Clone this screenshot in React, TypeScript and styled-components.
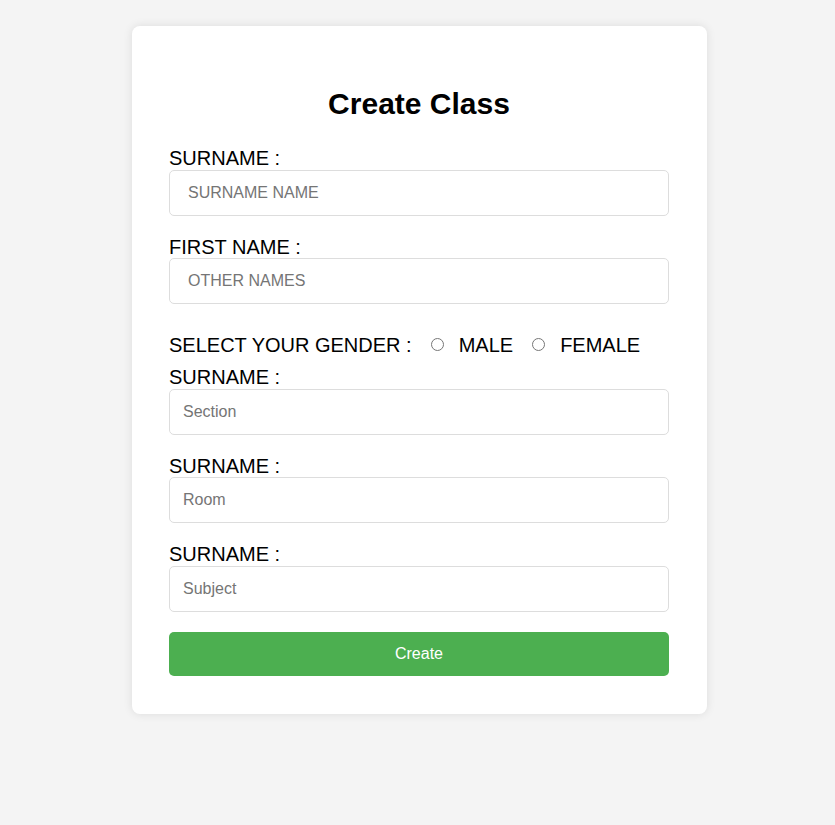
import React from "react";
import styled, { createGlobalStyle } from "styled-components";

const GlobalStyle = createGlobalStyle`
  html, body {
    margin: 0;
    padding: 0;
    background: #f4f4f4;
    font-family: "Liberation Sans", Arial, sans-serif;
  }
`;

const Page = styled.div`
  display: flex;
  justify-content: center;
  padding: 26px 0 0 4px;
  min-height: 825px;
  box-sizing: border-box;
`;

const Card = styled.form`
  width: 575px;
  box-sizing: border-box;
  background: #fff;
  border-radius: 8px;
  box-shadow: 0 0 10px rgba(0, 0, 0, 0.1);
  padding: 61px 38px 38px 37px;
  align-self: flex-start;
`;

const Title = styled.h2`
  margin: 0 0 26px;
  font-size: 30px;
  line-height: 34px;
  font-weight: bold;
  text-align: center;
  color: #000;
`;

const Label = styled.label`
  display: block;
  font-size: 20px;
  line-height: 22.6px;
  color: #000;
`;

const TextInput = styled.input<{ $indent: number }>`
  display: block;
  width: 100%;
  height: 46px;
  box-sizing: border-box;
  margin: 0 0 20px;
  padding: 0 12px 0 ${(p) => p.$indent}px;
  border: 1px solid #ddd;
  border-radius: 5px;
  font-family: "Liberation Sans", Arial, sans-serif;
  font-size: 16px;
  color: #000;
  outline: none;
  &::placeholder {
    color: #757575;
  }
`;

const GenderRow = styled.div`
  display: flex;
  align-items: center;
  height: 42px;
  font-size: 20px;
  color: #000;
`;

const GenderText = styled.span`
  white-space: nowrap;
`;

const Radio = styled.input`
  width: 13px;
  height: 13px;
  margin: 0 15px 0 19px;
  position: relative;
  top: -1px;
`;

const SubmitButton = styled.button`
  display: block;
  width: 100%;
  height: 44px;
  border: none;
  border-radius: 5px;
  background: #4caf50;
  color: #fff;
  font-family: "Liberation Sans", Arial, sans-serif;
  font-size: 16px;
  cursor: pointer;
`;

const fields = [
  { label: "SURNAME :", placeholder: "SURNAME NAME", indent: 18 },
  { label: "FIRST NAME :", placeholder: "OTHER NAMES", indent: 18 },
];

const fields2 = [
  { label: "SURNAME :", placeholder: "Section", indent: 13 },
  { label: "SURNAME :", placeholder: "Room", indent: 13 },
  { label: "SURNAME :", placeholder: "Subject", indent: 13 },
];

export default function App() {
  return (
    <>
      <GlobalStyle />
      <Page>
        <Card onSubmit={(e) => e.preventDefault()}>
          <Title>Create Class</Title>
          {fields.map((f, i) => (
            <React.Fragment key={i}>
              <Label>{f.label}</Label>
              <TextInput type="text" placeholder={f.placeholder} $indent={f.indent} />
            </React.Fragment>
          ))}
          <GenderRow>
            <GenderText>SELECT YOUR GENDER :</GenderText>
            <Radio type="radio" name="gender" />
            <GenderText>MALE</GenderText>
            <Radio type="radio" name="gender" />
            <GenderText>FEMALE</GenderText>
          </GenderRow>
          {fields2.map((f, i) => (
            <React.Fragment key={i}>
              <Label>{f.label}</Label>
              <TextInput type="text" placeholder={f.placeholder} $indent={f.indent} />
            </React.Fragment>
          ))}
          <SubmitButton type="submit">Create</SubmitButton>
        </Card>
      </Page>
    </>
  );
}
